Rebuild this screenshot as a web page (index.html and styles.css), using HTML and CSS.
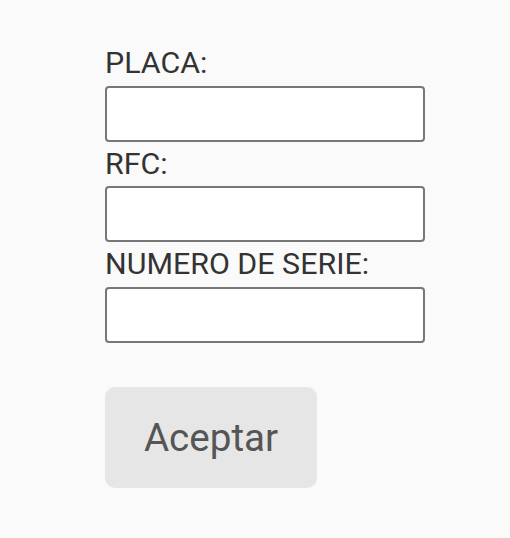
FILE: index.html
```html
<!DOCTYPE html>
<html lang="es">
<head>
  <meta charset="UTF-8">
  <meta name="viewport" content="width=device-width, initial-scale=1.0">
  <title>Consulta</title>
  <link rel="stylesheet" href="styles.css">
</head>
<body>
  <form class="form">
    <label class="label" for="placa">PLACA:</label>
    <input class="field" id="placa" type="text">
    <label class="label" for="rfc">RFC:</label>
    <input class="field" id="rfc" type="text">
    <label class="label" for="serie">NUMERO DE SERIE:</label>
    <input class="field" id="serie" type="text">
    <button class="btn" type="button">Aceptar</button>
  </form>
</body>
</html>
```

FILE: styles.css
```css
* {
  box-sizing: border-box;
  margin: 0;
  padding: 0;
}
body {
  font-family: Roboto, 'Noto Sans', sans-serif;
  background-color: #fafafa;
  color: #333;
}
.form {
  display: flex;
  flex-direction: column;
  align-items: flex-start;
  padding: 41px 0 0 105px;
}
.label {
  font-size: 30.4px;
  line-height: 44.5px;
  color: #333;
}
.field {
  width: 320px;
  height: 56px;
  border: 2px solid #777;
  border-radius: 4px;
  background: #fff;
  font-size: 24px;
  padding: 0 10px;
}
.btn {
  margin-top: 44px;
  width: 212px;
  height: 101px;
  border: none;
  border-radius: 10px;
  background: #e6e6e6;
  color: #555;
  font-family: Roboto, 'Noto Sans', sans-serif;
  font-size: 38.6px;
}
```
